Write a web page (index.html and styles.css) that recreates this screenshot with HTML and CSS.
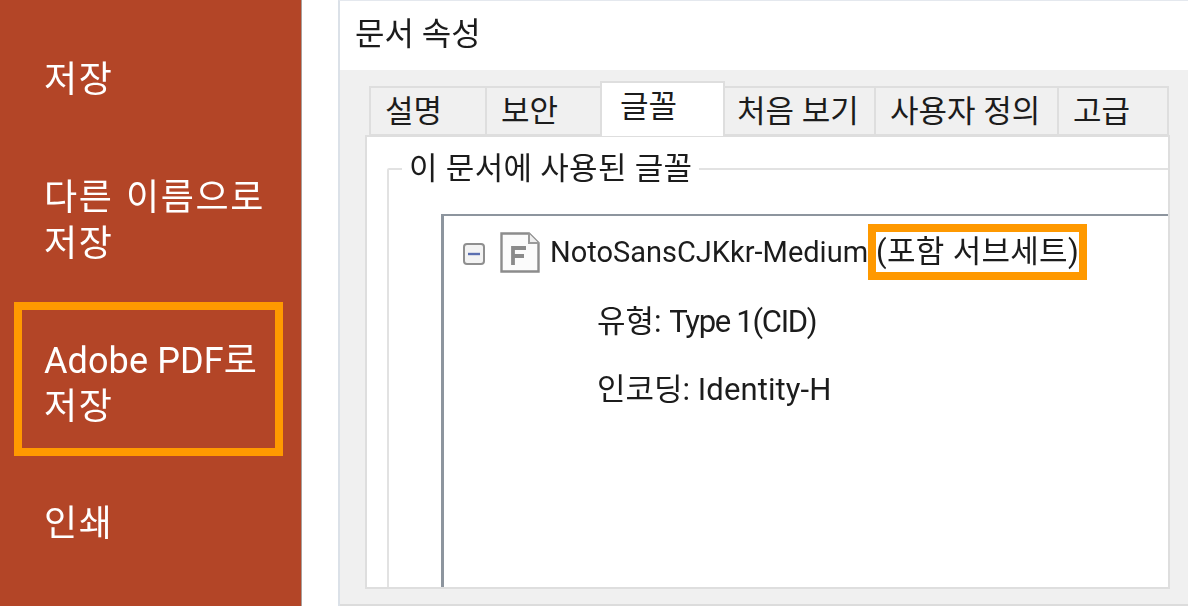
FILE: index.html
```html
<!DOCTYPE html>
<html lang="ko">
<head>
<meta charset="utf-8">
<title>문서 속성</title>
<link rel="stylesheet" href="styles.css">
</head>
<body>
<nav class="sidebar">
  <div class="menu-item first">저장</div>
  <div class="menu-item second">다른 이름으로<br>저장</div>
  <div class="menu-item marked"><span class="latin">Adobe PDF</span>로<br>저장</div>
  <div class="menu-item last">인쇄</div>
</nav>
<main class="stage">
  <section class="dialog">
    <header class="dialog-title">문서 속성</header>
    <div class="dialog-body">
      <div class="tabs">
        <div class="tab t1">설명</div>
        <div class="tab t2">보안</div>
        <div class="tab t3 active">글꼴</div>
        <div class="tab t4">처음 보기</div>
        <div class="tab t5">사용자 정의</div>
        <div class="tab t6">고급</div>
      </div>
      <div class="panel">
        <fieldset class="group">
          <legend class="group-label">이 문서에 사용된 글꼴</legend>
          <div class="tree">
            <div class="font-row">
              <svg class="toggle" viewBox="0 0 22 22" width="22" height="22" aria-hidden="true">
                <rect x="1" y="1" width="20" height="20" rx="3" fill="#f3f3f3" stroke="#8f8f8f" stroke-width="2"/>
                <path d="M5 11h12" stroke="#5b6fb0" stroke-width="2.4"/>
              </svg>
              <svg class="file" viewBox="0 0 40 41" width="40" height="41" aria-hidden="true">
                <path d="M1.5 1.5H29L38.5 11V39.5H1.5Z" fill="#fbfbfb" stroke="#8c8c8c" stroke-width="2.4"/>
                <path d="M29 1.5V11H38.5" fill="#eee" stroke="#9a9a9a" stroke-width="2"/>
                <path d="M13 33V16H26M13 24H24" fill="none" stroke="#8a8a8a" stroke-width="3.8"/>
              </svg>
              <span class="font-name">NotoSansCJKkr-Medium</span>
              <span class="subset">(포함 서브세트)</span>
            </div>
            <div class="detail d1">유형: <span class="type">Type 1(CID)</span></div>
            <div class="detail d2">인코딩: <span class="identity">Identity-H</span></div>
          </div>
        </fieldset>
      </div>
    </div>
  </section>
</main>
</body>
</html>
```
FILE: styles.css
```css
* { box-sizing: border-box; }
html, body { margin: 0; height: 606px; overflow: hidden; }
body {
  display: flex;
  background: #fff;
  color: #1c1c1c;
  font-family: Roboto, "Noto Sans CJK KR", sans-serif;
  filter: blur(0.6px);
}
.sidebar {
  flex: 0 0 302px;
  height: 606px;
  background: #b34527;
  border-right: 1px solid #a9a09c;
  padding: 57px 18px 0 14px;
  color: #fff;
  font-size: 36px;
  line-height: 46px;
  letter-spacing: 1.6px;
  word-spacing: 2px;
  white-space: nowrap;
}
.latin { letter-spacing: 0.1px; word-spacing: 0; }
.menu-item { padding-left: 30px; }
.second { margin-top: 72px; }
.marked {
  margin-top: 35px;
  height: 154px;
  padding: 28px 0 0 22px;
  border: 8px solid #ff9900;
}
.last { margin-top: 45px; }
.stage { flex: 1; padding-left: 36px; min-width: 0; }
.dialog {
  height: 606px;
  border-left: 2px solid #dbe1e8;
  border-top: 1px solid #e4e8ee;
  display: flex;
  flex-direction: column;
}
.dialog-title {
  height: 69px;
  padding: 10px 0 0 15px;
  font-size: 32px;
  line-height: 46px;
}
.dialog-body {
  flex: 1;
  background: #f0f0f0;
  padding: 11px 18px 0 25px;
  border-bottom: 2px solid #dcdcdc;
  font-size: 31px;
}
.tabs {
  display: flex;
  align-items: flex-end;
  height: 55px;
  padding-left: 4px;
  position: relative;
  z-index: 1;
  margin-bottom: -1px;
}
.tab {
  height: 50px;
  background: #f0f0f0;
  border: 2px solid #dedede;
  border-right-width: 0;
  padding-left: 14px;
  line-height: 48px;
  white-space: nowrap;
}
.t1 { width: 116px; }
.t2 { width: 115px; }
.t3 { width: 125px; }
.t4 { width: 149px; border-left-width: 0; padding-left: 12px; }
.t5 { width: 183px; }
.t6 { width: 112px; border-right-width: 2px; }
.tab.active {
  height: 55px;
  background: #fff;
  border-right-width: 2px;
  border-bottom: 0;
  padding-left: 18px;
  line-height: 48px;
}
.panel {
  height: 454px;
  background: #fff;
  border: 2px solid #dedede;
  overflow: hidden;
  padding: 15px 0 0 20px;
}
.group {
  margin: 0 -30px 0 0;
  padding: 0 0 0 52px;
  min-width: 0;
  height: 500px;
  border: 2px solid #e2e2e2;
  border-radius: 2px;
}
.group-label {
  margin: 0 0 0 -39px;
  padding: 0 7px;
  line-height: 34px;
  letter-spacing: 0.3px;
  white-space: nowrap;
}
.tree {
  height: 460px;
  margin-top: 28px;
  border: 2px solid #8d959e;
  border-left-width: 3px;
  background: #fff;
  padding: 7px 0 0 19px;
}
.font-row {
  display: flex;
  align-items: center;
  height: 58px;
  white-space: nowrap;
}
.toggle { flex: none; margin-right: 15px; margin-top: 4px; }
.file { flex: none; margin-right: 10px; }
.font-name { font-size: 29px; }
.subset {
  height: 56px;
  border: 8px solid #ff9900;
  line-height: 39px;
  letter-spacing: 0.3px;
  background: #fff;
}
.detail { padding-left: 134px; line-height: 40px; white-space: nowrap; }
.d1 { margin-top: 21px; }
.d2 { margin-top: 28px; }
.type { letter-spacing: -1.3px; }
.identity { letter-spacing: 0.1px; }
```
